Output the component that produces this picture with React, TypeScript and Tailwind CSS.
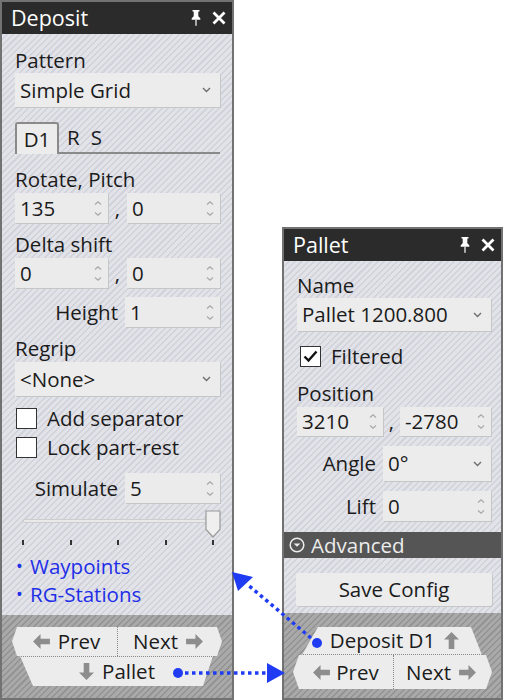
import React from "react";

const hatch =
  "bg-[image:repeating-linear-gradient(135deg,#e2e2e9_0px,#e2e2e9_3px,#d2d2da_3px,#d2d2da_4.5px)]";
const hatchDark =
  "bg-[image:repeating-linear-gradient(135deg,#a9a9a9_0px,#a9a9a9_3px,#949494_3px,#949494_4.5px)]";

function SelChev() {
  return (
    <svg width="9" height="6" viewBox="0 0 9 6">
      <path d="M1 1l3.5 3.5L8 1" stroke="#6e6e6e" strokeWidth="1.4" fill="none" />
    </svg>
  );
}

function SpinArrows() {
  return (
    <div className="flex flex-col gap-[7px] items-center">
      <svg width="8" height="4" viewBox="0 0 8 4">
        <path d="M1 3.5L4 0.8L7 3.5" stroke="#a9a9a9" strokeWidth="1.2" fill="none" />
      </svg>
      <svg width="8" height="4" viewBox="0 0 8 4">
        <path d="M1 0.5L4 3.2L7 0.5" stroke="#a9a9a9" strokeWidth="1.2" fill="none" />
      </svg>
    </div>
  );
}

function Spin({ value, className }: { value: string; className: string }) {
  return (
    <div
      className={`${className} h-full bg-[#ebebeb] shadow-[1px_1px_0_#c6c6c6] flex items-center justify-between pl-[5px] pr-[6px]`}
    >
      <span>{value}</span>
      <SpinArrows />
    </div>
  );
}

function Select({ text, className }: { text: string; className: string }) {
  return (
    <div
      className={`${className} bg-[#ececec] shadow-[1px_1px_0_#c6c6c6] flex items-center justify-between pl-[5px] pr-[9px]`}
    >
      <span>{text}</span>
      <SelChev />
    </div>
  );
}

function Pin() {
  return (
    <svg width="10" height="16" viewBox="0 0 10 16">
      <path d="M1.5 0h7v1.6h-1.2v4.6l2 2v1.6H0.7V8.2l2-2V1.6H1.5z" fill="#fff" />
      <rect x="4.4" y="9.8" width="1.2" height="6" fill="#fff" />
    </svg>
  );
}

function Close() {
  return (
    <svg width="14" height="14" viewBox="0 0 14 14">
      <path d="M1.5 1.5L12.5 12.5M12.5 1.5L1.5 12.5" stroke="#fff" strokeWidth="2.8" />
    </svg>
  );
}

function TitleBar({ title }: { title: string }) {
  return (
    <div className="h-[32px] bg-[#2b2b2b] flex items-center justify-between pl-[9px] pr-[6px] text-white text-[21.5px]">
      <span className="leading-none">{title}</span>
      <div className="flex items-center gap-[11px]">
        <Pin />
        <Close />
      </div>
    </div>
  );
}

function Check({ checked }: { checked?: boolean }) {
  return (
    <div className="w-[21px] h-[21px] bg-white border-[1.5px] border-[#333] flex items-center justify-center">
      {checked && (
        <svg width="15" height="13" viewBox="0 0 15 13">
          <path d="M1.5 6.5L5.5 10.5L13.5 1.5" stroke="#111" strokeWidth="2.4" fill="none" />
        </svg>
      )}
    </div>
  );
}

function ArrowL() {
  return (
    <svg width="17" height="15" viewBox="0 0 18 16">
      <polygon points="0,8 8,0 8,5 18,5 18,11 8,11 8,16" fill="#8d8d8d" />
    </svg>
  );
}
function ArrowR() {
  return (
    <svg width="17" height="15" viewBox="0 0 18 16">
      <polygon points="18,8 10,0 10,5 0,5 0,11 10,11 10,16" fill="#8d8d8d" />
    </svg>
  );
}
function ArrowD() {
  return (
    <svg width="15" height="17" viewBox="0 0 16 18">
      <polygon points="8,18 0,10 5,10 5,0 11,0 11,10 16,10" fill="#8d8d8d" />
    </svg>
  );
}
function ArrowU() {
  return (
    <svg width="15" height="17" viewBox="0 0 16 18">
      <polygon points="8,0 0,8 5,8 5,18 11,18 11,8 16,8" fill="#8d8d8d" />
    </svg>
  );
}

function LeftPanel() {
  return (
    <div className="w-[234px] h-[700px] border-2 border-[#727272] flex flex-col shrink-0">
      <TitleBar title="Deposit" />
      <div className={`flex-1 flex flex-col ${hatch}`}>
        <div className="pl-[13px] pr-[12px] flex flex-col">
          <div className="mt-[13px] h-[26px] flex items-center">Pattern</div>
          <Select text="Simple Grid" className="h-[34px]" />
          <div className="mt-[15px] h-[32px] flex items-end">
            <div className="h-[32px] w-[44px] border-2 border-b-0 border-[#8a8a8a] bg-[#ececec] rounded-t-[3px] flex items-center justify-center">
              D1
            </div>
            <div className="flex-1 h-full border-b-2 border-[#8a8a8a] flex items-center gap-[11px] pl-[8px]">
              <span>R</span>
              <span>S</span>
            </div>
          </div>
          <div className="mt-[12px] h-[27px] flex items-center">Rotate, Pitch</div>
          <div className="h-[30px] flex items-center">
            <Spin value="135" className="w-[93px]" />
            <span className="w-[19px] text-center">,</span>
            <Spin value="0" className="flex-1" />
          </div>
          <div className="mt-[7px] h-[28px] flex items-center">Delta shift</div>
          <div className="h-[30px] flex items-center">
            <Spin value="0" className="w-[93px]" />
            <span className="w-[19px] text-center">,</span>
            <Spin value="0" className="flex-1" />
          </div>
          <div className="mt-[9px] h-[30px] flex items-center">
            <span className="w-[110px] text-right pr-[7px]">Height</span>
            <Spin value="1" className="flex-1" />
          </div>
          <div className="mt-[7px] h-[28px] flex items-center">Regrip</div>
          <Select text="<None>" className="h-[34px]" />
          <div className="mt-[8px] h-[28px] flex items-center gap-[10px] pl-[1px]">
            <Check />
            <span>Add separator</span>
          </div>
          <div className="mt-[1px] h-[28px] flex items-center gap-[10px] pl-[1px]">
            <Check />
            <span>Lock part-rest</span>
          </div>
          <div className="mt-[12px] h-[30px] flex items-center">
            <span className="w-[110px] text-right pr-[7px]">Simulate</span>
            <Spin value="5" className="flex-1" />
          </div>
          <div className="mt-[4px] h-[30px] relative">
            <div className="absolute left-[8px] top-[12px] w-[194px] h-[4px] bg-[#e9e9e9] border border-[#cdcdcd] rounded-[1px]" />
            <svg className="absolute left-[190px] top-[3px]" width="16" height="28" viewBox="0 0 16 28">
              <path d="M1 1h14v18.5l-7 7.5l-7-7.5z" fill="#efefef" stroke="#9a9a9a" strokeWidth="1.2" />
            </svg>
          </div>
          <div className="mt-[3px] h-[6px] pl-[7px] w-[199px] flex justify-between">
            <div className="w-[2px] h-[5px] bg-[#333]" />
            <div className="w-[2px] h-[5px] bg-[#333]" />
            <div className="w-[2px] h-[5px] bg-[#333]" />
            <div className="w-[2px] h-[5px] bg-[#333]" />
            <div className="w-[2px] h-[5px] bg-[#333]" />
          </div>
          <div className="mt-[6px] h-[28px] flex items-center text-[#1e2fe8] pl-[1px]">
            <span className="text-[18px] w-[14px]">•</span>
            <span>Waypoints</span>
          </div>
          <div className="h-[28px] flex items-center text-[#1e2fe8] pl-[1px]">
            <span className="text-[18px] w-[14px]">•</span>
            <span>RG-Stations</span>
          </div>
        </div>
        <div className={`mt-auto h-[83px] ${hatchDark} px-[10px] pt-[12px]`}>
          <div className="flex h-[29px]">
            <div className="w-[105px] bg-[#ececec] [clip-path:polygon(5px_0,100%_0,100%_100%,5px_100%,0_50%)] flex items-center justify-center gap-[8px] pl-[4px]">
              <ArrowL />
              <span>Prev</span>
            </div>
            <div className="flex-1 bg-[#ececec] border-l border-dotted border-[#8a8a8a] [clip-path:polygon(0_0,calc(100%-5px)_0,100%_50%,calc(100%-5px)_100%,0_100%)] flex items-center justify-center gap-[8px] pr-[4px]">
              <span>Next</span>
              <ArrowR />
            </div>
          </div>
          <div className="h-[30px] bg-[#ececec] border-t border-dotted border-[#8a8a8a] [clip-path:polygon(8px_0,calc(100%-9px)_0,calc(100%-19px)_100%,21px_100%)] flex items-center justify-center gap-[8px]">
            <ArrowD />
            <span>Pallet</span>
          </div>
        </div>
      </div>
    </div>
  );
}

function RightPanel() {
  return (
    <div className="mt-[227px] ml-[48px] w-[221px] h-[473px] border-2 border-[#727272] flex flex-col shrink-0">
      <TitleBar title="Pallet" />
      <div className={`flex-1 flex flex-col ${hatch}`}>
        <div className="pl-[13px] pr-[10px] flex flex-col">
          <div className="mt-[12px] h-[25px] flex items-center">Name</div>
          <Select text="Pallet 1200.800" className="h-[33px]" />
          <div className="mt-[9px] h-[32px] flex items-center gap-[10px] pl-[3px]">
            <Check checked />
            <span>Filtered</span>
          </div>
          <div className="mt-[8px] h-[27px] flex items-center">Position</div>
          <div className="h-[29px] flex items-center">
            <Spin value="3210" className="w-[86px]" />
            <span className="w-[17px] text-center">,</span>
            <Spin value="-2780" className="flex-1" />
          </div>
          <div className="mt-[10px] h-[35px] flex items-center">
            <span className="w-[86px] text-right pr-[7px]">Angle</span>
            <Select text="0°" className="flex-1 h-full" />
          </div>
          <div className="mt-[10px] h-[30px] flex items-center">
            <span className="w-[86px] text-right pr-[7px]">Lift</span>
            <Spin value="0" className="flex-1" />
          </div>
        </div>
        <div className="mt-[11px] h-[26px] bg-[#555555] flex items-center gap-[6px] pl-[5px] text-[#ececec]">
          <svg width="16" height="16" viewBox="0 0 16 16">
            <circle cx="8" cy="8" r="6.8" stroke="#ececec" strokeWidth="1.5" fill="none" />
            <path d="M4.6 6.4L8 9.8L11.4 6.4z" fill="#ececec" />
          </svg>
          <span>Advanced</span>
        </div>
        <div className="pl-[12px] pr-[9px]">
          <div className="mt-[15px] h-[33px] bg-[#ececec] rounded-[2px] shadow-[1px_1px_0_#c6c6c6] flex items-center justify-center">
            Save Config
          </div>
        </div>
        <div className={`flex-1 mt-[7px] ${hatchDark} px-[9px] pt-[14px]`}>
          <div className="h-[28px] bg-[#ececec] border-b border-dotted border-[#8a8a8a] [clip-path:polygon(25px_0,calc(100%-21px)_0,calc(100%-10px)_100%,9px_100%)] flex items-center justify-center gap-[9px] pl-[4px]">
            <span>Deposit D1</span>
            <ArrowU />
          </div>
          <div className="flex h-[34px]">
            <div className="w-[100px] bg-[#ececec] [clip-path:polygon(6px_0,100%_0,100%_100%,6px_100%,0_50%)] flex items-center justify-center gap-[6px] pl-[6px]">
              <ArrowL />
              <span>Prev</span>
            </div>
            <div className="flex-1 bg-[#ececec] border-l border-dotted border-[#8a8a8a] [clip-path:polygon(0_0,calc(100%-6px)_0,100%_50%,calc(100%-6px)_100%,0_100%)] flex items-center justify-center gap-[8px] pr-[4px]">
              <span>Next</span>
              <ArrowR />
            </div>
          </div>
        </div>
      </div>
    </div>
  );
}

function Overlay() {
  const c = "#1f3cf2";
  return (
    <svg className="absolute inset-0 pointer-events-none" width="505" height="700" viewBox="0 0 505 700">
      <circle cx="178" cy="673" r="5" fill={c} />
      <line x1="185" y1="673" x2="268" y2="673" stroke={c} strokeWidth="3.5" strokeDasharray="3.5 3.5" />
      <polygon points="285,673 267,663 267,683" fill={c} />
      <circle cx="317" cy="643" r="5" fill={c} />
      <line x1="311" y1="638" x2="248" y2="585" stroke={c} strokeWidth="3.5" strokeDasharray="3.5 3.5" />
      <polygon points="232,572 238,591 253,577" fill={c} />
    </svg>
  );
}

export default function App() {
  return (
    <div className="relative w-[505px] h-[700px] bg-white flex items-start font-['Open_Sans',sans-serif] text-[20.5px] leading-none text-[#1b1b1b] overflow-hidden">
      <LeftPanel />
      <RightPanel />
      <Overlay />
    </div>
  );
}
